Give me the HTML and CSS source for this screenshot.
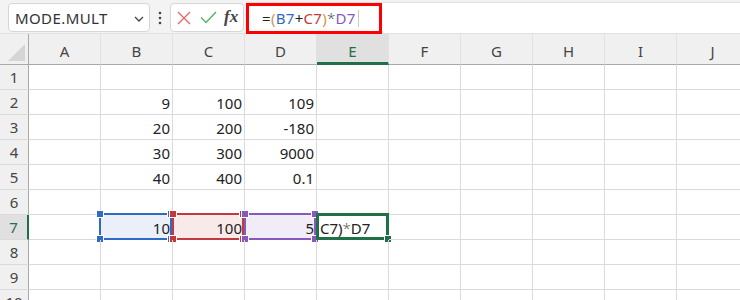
FILE: index.html
```html
<!DOCTYPE html>
<html lang="ja">
<head>
    <meta charset="UTF-8">
    <title>Excel - MODE.MULT</title>
    <link rel="stylesheet" href="styles.css">
</head>
<body>
    <div class="toolbar">
        <div class="name-box">
            <span>MODE.MULT</span>
            <svg class="chevron" width="10" height="6" viewBox="0 0 10 6"><path d="M1 1 L5 5 L9 1" fill="none" stroke="#444" stroke-width="1.3"/></svg>
        </div>
        <svg class="dots" width="4" height="14" viewBox="0 0 4 14"><circle cx="2" cy="2" r="1.3" fill="#444"/><circle cx="2" cy="7" r="1.3" fill="#444"/><circle cx="2" cy="12" r="1.3" fill="#444"/></svg>
        <div class="fx-box">
            <svg width="14" height="14" viewBox="0 0 14 14"><path d="M1 1 L13 13 M13 1 L1 13" stroke="#e8696b" stroke-width="1.4" fill="none"/></svg>
            <svg width="17" height="13" viewBox="0 0 17 13"><path d="M1 6.5 L6 11.5 L16 1" stroke="#5bb36b" stroke-width="1.5" fill="none"/></svg>
            <span class="fx">fx</span>
        </div>
        <div class="formula">
            <div class="formula-hl">
                <span>=</span><span class="paren">(</span><span class="ref-b">B7</span><span>+</span><span class="ref-c">C7</span><span class="paren">)</span><span class="star">*</span><span class="ref-d">D7</span><span class="caret"></span>
            </div>
        </div>
    </div>

    <div class="sheet">
        <div class="corner"><span class="tri"></span></div>
        <div class="col-head">A</div>
        <div class="col-head">B</div>
        <div class="col-head">C</div>
        <div class="col-head">D</div>
        <div class="col-head active">E</div>
        <div class="col-head">F</div>
        <div class="col-head">G</div>
        <div class="col-head">H</div>
        <div class="col-head">I</div>
        <div class="col-head">J</div>

        <div class="row-head">1</div>
        <div class="cell"></div><div class="cell"></div><div class="cell"></div><div class="cell"></div><div class="cell"></div><div class="cell"></div><div class="cell"></div><div class="cell"></div><div class="cell"></div><div class="cell"></div>

        <div class="row-head">2</div>
        <div class="cell"></div><div class="cell num">9</div><div class="cell num">100</div><div class="cell num">109</div><div class="cell"></div><div class="cell"></div><div class="cell"></div><div class="cell"></div><div class="cell"></div><div class="cell"></div>

        <div class="row-head">3</div>
        <div class="cell"></div><div class="cell num">20</div><div class="cell num">200</div><div class="cell num">-180</div><div class="cell"></div><div class="cell"></div><div class="cell"></div><div class="cell"></div><div class="cell"></div><div class="cell"></div>

        <div class="row-head">4</div>
        <div class="cell"></div><div class="cell num">30</div><div class="cell num">300</div><div class="cell num">9000</div><div class="cell"></div><div class="cell"></div><div class="cell"></div><div class="cell"></div><div class="cell"></div><div class="cell"></div>

        <div class="row-head">5</div>
        <div class="cell"></div><div class="cell num">40</div><div class="cell num">400</div><div class="cell num">0.1</div><div class="cell"></div><div class="cell"></div><div class="cell"></div><div class="cell"></div><div class="cell"></div><div class="cell"></div>

        <div class="row-head">6</div>
        <div class="cell"></div><div class="cell"></div><div class="cell"></div><div class="cell"></div><div class="cell"></div><div class="cell"></div><div class="cell"></div><div class="cell"></div><div class="cell"></div><div class="cell"></div>

        <div class="row-head active">7</div>
        <div class="cell"></div>
        <div class="cell num fill-b">10<div class="range range-b"><i class="h tl"></i><i class="h tr"></i><i class="h bl"></i><i class="h br"></i></div></div>
        <div class="cell num fill-c">100<div class="range range-c"><i class="h tl"></i><i class="h tr"></i><i class="h bl"></i><i class="h br"></i></div></div>
        <div class="cell num fill-d">5<div class="range range-d"><i class="h tl"></i><i class="h tr"></i><i class="h bl"></i><i class="h br"></i></div></div>
        <div class="cell editing">C7)<span class="star">*</span>D7<div class="active-cell"><i class="fill-handle"></i></div></div>
        <div class="cell"></div><div class="cell"></div><div class="cell"></div><div class="cell"></div><div class="cell"></div>

        <div class="row-head">8</div>
        <div class="cell"></div><div class="cell"></div><div class="cell"></div><div class="cell"></div><div class="cell"></div><div class="cell"></div><div class="cell"></div><div class="cell"></div><div class="cell"></div><div class="cell"></div>

        <div class="row-head">9</div>
        <div class="cell"></div><div class="cell"></div><div class="cell"></div><div class="cell"></div><div class="cell"></div><div class="cell"></div><div class="cell"></div><div class="cell"></div><div class="cell"></div><div class="cell"></div>

        <div class="row-head">10</div>
        <div class="cell"></div><div class="cell"></div><div class="cell"></div><div class="cell"></div><div class="cell"></div><div class="cell"></div><div class="cell"></div><div class="cell"></div><div class="cell"></div><div class="cell"></div>
    </div>
</body>
</html>
```

FILE: styles.css
```css
:root {
    --toolbar-bg: #f3f3f3;
    --head-bg: #f0f0f0;
    --head-active: #e0e0e0;
    --grid-line: #dadada;
    --head-line: #a9a9a9;
    --green: #1f7145;
    --blue: #2f6bc5;
    --red: #c4393d;
    --purple: #8759bf;
}

* {
    margin: 0;
    padding: 0;
    box-sizing: border-box;
}

body {
    width: 740px;
    height: 300px;
    overflow: hidden;
    background: #fff;
    color: #222;
    font-family: "Noto Sans", "Noto Sans CJK JP", sans-serif;
    font-size: 15px;
    line-height: 1.2;
}

/* Toolbar: name box + formula bar */
.toolbar {
    height: 34px;
    background: var(--toolbar-bg);
    border-bottom: 1px solid #e2e2e2;
    display: flex;
    align-items: flex-start;
    padding-top: 3px;
}

.name-box {
    margin-left: 8px;
    width: 142px;
    height: 29px;
    background: #fff;
    border: 1px solid #d6d6d6;
    border-radius: 4px;
    display: flex;
    align-items: center;
    justify-content: space-between;
    padding: 0 5px 0 6px;
    color: #333;
    letter-spacing: 0.4px;
}

.chevron {
    margin-top: 2px;
}

.dots {
    margin: 8px 8px 0 8px;
}

.fx-box {
    width: 74px;
    height: 29px;
    background: #fff;
    border: 1px solid #d6d6d6;
    border-radius: 4px;
    display: flex;
    align-items: center;
    padding-left: 6px;
    gap: 9px;
}

.fx {
    font-family: "Liberation Serif", serif;
    font-style: italic;
    font-weight: bold;
    font-size: 17px;
    color: #444;
    margin-left: -2px;
}

.formula {
    flex: 1;
    height: 31px;
    margin-top: -1px;
    margin-left: 2px;
    background: #fff;
    border-top: 1px solid #e0e0e0;
}

.formula-hl {
    width: 136px;
    height: 31px;
    border: 3px solid #f00;
    display: flex;
    align-items: center;
    padding-left: 13px;
    line-height: 1;
    letter-spacing: 0.3px;
}

.paren { color: #c99a4a; }
.ref-b { color: var(--blue); }
.ref-c { color: var(--red); }
.ref-d { color: var(--purple); }

.star {
    font-weight: 300;
    color: #555;
}

.caret {
    display: inline-block;
    width: 1px;
    height: 17px;
    background: #c8c8c8;
    margin-left: 2px;
}

/* Sheet grid */
.sheet {
    display: grid;
    grid-template-columns: 29px repeat(10, 72px);
    grid-template-rows: 31px;
    grid-auto-rows: 25px;
}

.corner {
    background: var(--head-bg);
    border-right: 1px solid var(--head-line);
    border-bottom: 1px solid var(--head-line);
    display: flex;
    align-items: flex-end;
    justify-content: flex-end;
    padding: 0 3px 3px 0;
}

.tri {
    width: 17px;
    height: 17px;
    background: #d5d5d5;
    clip-path: polygon(100% 0, 100% 100%, 0 100%);
}

.col-head {
    background: var(--head-bg);
    border-right: 1px solid #e2e2e2;
    border-bottom: 1px solid var(--head-line);
    display: flex;
    align-items: center;
    justify-content: center;
    padding-top: 3px;
    color: #444;
}

.col-head.active {
    background: var(--head-active);
    border-bottom: 3px solid var(--green);
    padding-top: 5px;
    color: var(--green);
}

.row-head {
    background: var(--head-bg);
    border-right: 1px solid var(--head-line);
    border-bottom: 1px solid var(--grid-line);
    display: flex;
    align-items: center;
    justify-content: center;
    color: #444;
}

.row-head.active {
    background: var(--head-active);
    border-right: 2px solid var(--green);
    color: #2b6a55;
}

.cell {
    position: relative;
    border-right: 1px solid var(--grid-line);
    border-bottom: 1px solid var(--grid-line);
    display: flex;
    align-items: center;
    padding: 1px 2px 0 3px;
    white-space: nowrap;
}

.cell.num {
    justify-content: flex-end;
}

.fill-b { background: #eaeff9; }
.fill-c { background: #f9eaea; }
.fill-d { background: #f1edf8; }

/* Range highlight boxes drawn over the cells */
.range {
    position: absolute;
    top: -2px;
    bottom: -1px;
    left: -1px;
    right: 0;
    border: 2px solid;
}

.range-b { left: -2px; border-color: var(--blue); color: var(--blue); }
.range-c { border-color: var(--red); color: var(--red); }
.range-d { border-color: var(--purple); color: var(--purple); }

.h {
    position: absolute;
    width: 6px;
    height: 6px;
    background: currentColor;
    box-shadow: 0 0 0 1px #fff;
}

.h.tl { left: -4px; top: -4px; }
.h.tr { right: -4px; top: -4px; }
.h.bl { left: -4px; bottom: -4px; }
.h.br { right: -4px; bottom: -4px; }

.active-cell {
    position: absolute;
    top: -2px;
    bottom: -1px;
    left: -1px;
    right: -1px;
    border: 3px solid var(--green);
}

.fill-handle {
    position: absolute;
    right: -5px;
    bottom: -5px;
    width: 6px;
    height: 6px;
    background: var(--green);
    box-shadow: 0 0 0 1px #fff;
}
```
